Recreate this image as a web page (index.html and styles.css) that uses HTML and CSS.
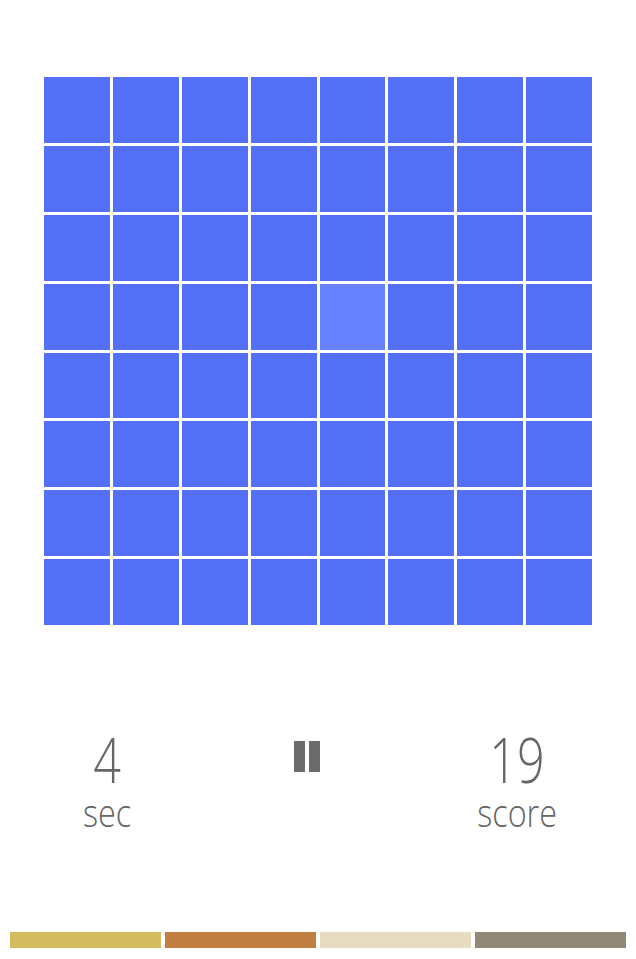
FILE: index.html
```html
<!DOCTYPE html>
<html lang="en">
<head>
    <meta charset="UTF-8">
    <meta name="viewport" content="width=device-width, initial-scale=1.0">
    <title>Color Grid</title>
    <link rel="stylesheet" href="styles.css">
</head>
<body>
    <div class="screen">
        <div class="board" id="board"></div>

        <div class="stats">
            <div class="stat stat-time">
                <span class="stat-value">4</span>
                <span class="stat-label">sec</span>
            </div>
            <div class="stat stat-pause">
                <button class="pause" aria-label="Pause">
                    <span class="pause-bar"></span>
                    <span class="pause-bar"></span>
                </button>
            </div>
            <div class="stat stat-score">
                <span class="stat-value">19</span>
                <span class="stat-label">score</span>
            </div>
        </div>

        <div class="palette">
            <span class="swatch swatch-gold"></span>
            <span class="swatch swatch-copper"></span>
            <span class="swatch swatch-sand"></span>
            <span class="swatch swatch-stone"></span>
        </div>
    </div>

    <script>
        const board = document.getElementById('board');
        const odd = 3 * 8 + 4;
        for (let i = 0; i < 64; i++) {
            const cell = document.createElement('div');
            cell.className = i === odd ? 'cell cell-odd' : 'cell';
            board.appendChild(cell);
        }
    </script>
</body>
</html>
```

FILE: styles.css
```css
:root {
    --tile: #5470f6;
    --tile-odd: #6680fe;
    --text: #666666;
}

* {
    margin: 0;
    padding: 0;
    box-sizing: border-box;
}

body {
    background: #ffffff;
    color: var(--text);
    font-family: 'Open Sans', 'Noto Sans', sans-serif;
    font-weight: 300;
}

.screen {
    width: 636px;
    height: 959px;
    display: flex;
    flex-direction: column;
}

.board {
    margin: 77px 0 0 44px;
    width: 548px;
    height: 548px;
    display: grid;
    grid-template-columns: repeat(8, 1fr);
    grid-template-rows: repeat(8, 1fr);
    gap: 3px;
}

.cell {
    background: var(--tile);
}

.cell-odd {
    background: var(--tile-odd);
}

.stats {
    margin-top: 98px;
    display: grid;
    grid-template-columns: 214px 186px 234px;
}

.stat {
    display: flex;
    flex-direction: column;
    align-items: center;
}

/* the numbers on the device are narrow and tall */
.stat-value {
    font-size: 63px;
    line-height: 72px;
    transform: scaleX(0.77);
}

.stat-label {
    font-size: 39px;
    line-height: 34px;
    transform: scaleX(0.83);
}

.pause {
    margin-top: 18px;
    display: flex;
    gap: 4px;
    background: none;
    border: none;
}

.pause-bar {
    width: 11px;
    height: 31px;
    background: #6b6b6b;
}

.palette {
    margin: auto 0 11px 10px;
    display: flex;
    gap: 4px;
}

.swatch {
    width: 151px;
    height: 16px;
}

.swatch-gold { background: #d2bc5f; }
.swatch-copper { background: #c27f42; }
.swatch-sand { background: #e8dcc0; }
.swatch-stone { background: #918878; }
```
